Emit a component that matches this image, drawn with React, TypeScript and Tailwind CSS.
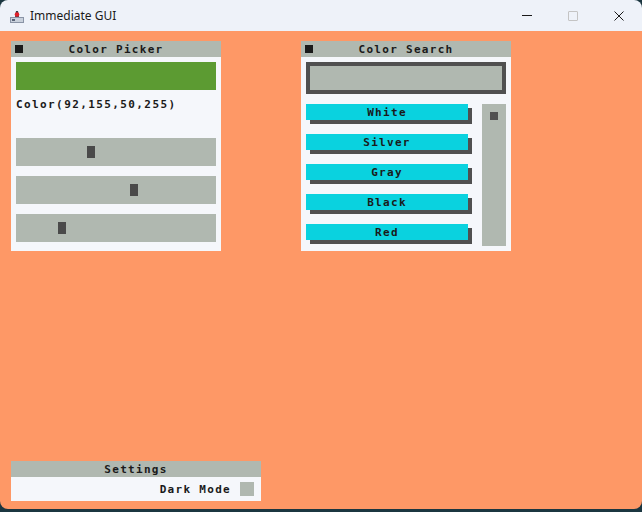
import React from "react";

const pixel = { fontFamily: '"DejaVu Sans Mono", "Liberation Mono", monospace' };

const Header = ({ title, box = true }: { title: string; box?: boolean }) => (
    <div className="relative h-[16px] bg-[#b0b8b0] flex items-center justify-center">
        {box && <div className="absolute left-[4px] top-[4px] w-[8px] h-[8px] bg-[#1a1a1a]" />}
        <span className="text-[11px] font-bold tracking-[1.3px] text-[#1a1a1a] leading-none" style={pixel}>{title}</span>
    </div>
);

const Slider = ({ knob }: { knob: number }) => (
    <div className="relative h-[28px] bg-[#b0b8b0]">
        <div className="absolute top-[8px] w-[8px] h-[12px] bg-[#4a4a4a]" style={{ left: knob }} />
    </div>
);

const colors = ["White", "Silver", "Gray", "Black", "Red"];

export default function App() {
    return (
        <div className="w-[642px] h-[512px] bg-[#1b3640]">
            <div className="w-[642px] h-[509px] rounded-lg overflow-hidden flex flex-col">
                <div className="h-[31px] bg-[#eef2f9] flex items-center" style={{ fontFamily: '"Noto Sans", "Open Sans", sans-serif' }}>
                    <svg className="ml-[9px]" width="16" height="16" viewBox="0 0 16 16">
                        <rect x="1" y="9" width="14" height="6" fill="#8a94a6" />
                        <rect x="2" y="10" width="12" height="4" fill="#c9d1dc" />
                        <path d="M6 9 L7 3 L9 3 L10 9 Z" fill="#3b3f4a" />
                        <circle cx="8" cy="6.5" r="2.3" fill="#e0202a" />
                        <rect x="3" y="11" width="3" height="2" fill="#5a6478" />
                    </svg>
                    <span className="ml-[5px] text-[12px] text-[#1a1a1a]">Immediate GUI</span>
                    <div className="ml-auto flex items-center h-full">
                        <div className="w-[46px] h-full flex items-center justify-center">
                            <div className="w-[10px] h-[1px] bg-[#1a1a1a]" />
                        </div>
                        <div className="w-[46px] h-full flex items-center justify-center">
                            <div className="w-[10px] h-[10px] border border-[#c4c4c4] rounded-[1px]" />
                        </div>
                        <div className="w-[46px] h-full flex items-center justify-center">
                            <svg width="10" height="10" viewBox="0 0 10 10">
                                <path d="M0.5 0.5 L9.5 9.5 M9.5 0.5 L0.5 9.5" stroke="#1a1a1a" strokeWidth="1" />
                            </svg>
                        </div>
                    </div>
                </div>
                <div className="relative flex-1 bg-[#fe9866]">
                    {/* Color Picker */}
                    <div className="absolute left-[11px] top-[10px] w-[210px] bg-[#f5f7fb]">
                        <Header title="Color Picker" />
                        <div className="px-[5px] pt-[5px] pb-[9px] flex flex-col">
                            <div className="h-[28px] bg-[#5c9b32]" />
                            <div className="mt-[9px] h-[10px] flex items-center text-[11px] font-bold tracking-[1.4px] text-[#1a1a1a] leading-none" style={pixel}>
                                Color(92,155,50,255)
                            </div>
                            <div className="mt-[29px] flex flex-col gap-[10px]">
                                <Slider knob={71} />
                                <Slider knob={114} />
                                <Slider knob={42} />
                            </div>
                        </div>
                    </div>

                    {/* Color Search */}
                    <div className="absolute left-[301px] top-[10px] w-[210px] h-[210px] bg-[#f5f7fb]">
                        <Header title="Color Search" />
                        <div className="px-[5px] pt-[5px]">
                            <div className="h-[32px] border-[4px] border-[#505050] bg-[#b0b8b0]" />
                            <div className="mt-[10px] flex">
                                <div className="flex flex-col gap-[10px]">
                                    {colors.map((c) => (
                                        <div key={c} className="relative w-[166px] h-[20px]">
                                            <div className="absolute left-[4px] top-[4px] w-[162px] h-[16px] bg-[#505050]" />
                                            <div className="absolute left-0 top-0 w-[162px] h-[16px] bg-[#0ad2df] flex items-center justify-center text-[11px] font-bold tracking-[1.3px] text-[#1a1a1a] leading-none" style={pixel}>
                                                {c}
                                            </div>
                                        </div>
                                    ))}
                                </div>
                                <div className="ml-[10px] w-[24px] h-[142px] bg-[#b0b8b0] pt-[8px] pl-[8px]">
                                    <div className="w-[8px] h-[8px] bg-[#505050]" />
                                </div>
                            </div>
                        </div>
                    </div>

                    {/* Settings */}
                    <div className="absolute left-[11px] top-[430px] w-[250px] bg-[#f5f7fb]">
                        <Header title="Settings" box={false} />
                        <div className="h-[24px] flex items-center justify-end pr-[7px] gap-[9px]">
                            <span className="text-[11px] font-bold tracking-[1.3px] text-[#1a1a1a] leading-none" style={pixel}>Dark Mode</span>
                            <div className="w-[14px] h-[14px] bg-[#b0b8b0]" />
                        </div>
                    </div>
                </div>
            </div>
        </div>
    );
}
